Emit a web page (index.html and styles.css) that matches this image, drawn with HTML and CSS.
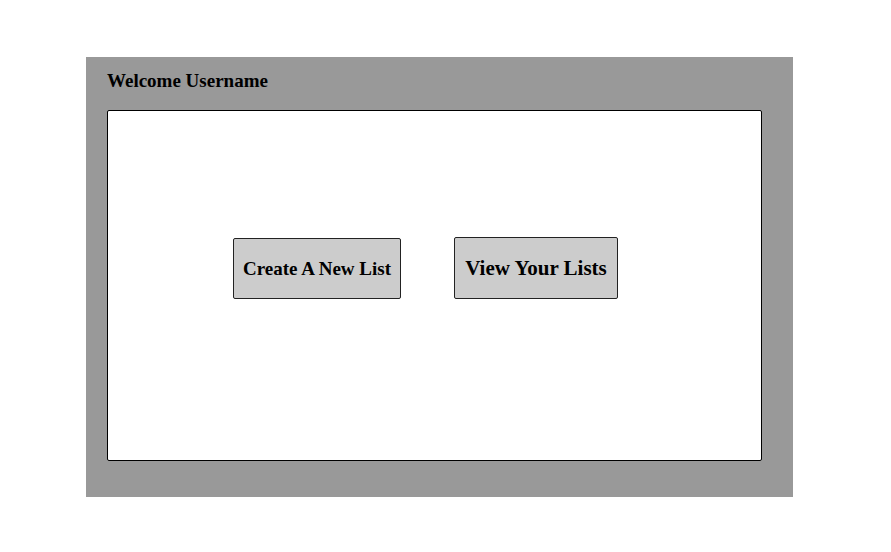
FILE: index.html
```html
<!DOCTYPE html>
<html lang="en">
<head>
<meta charset="utf-8">
<title>Welcome</title>
<link rel="stylesheet" href="styles.css">
</head>
<body>
	<div class="panel">
		<h1 class="welcome">Welcome Username</h1>
		<div class="content">
			<div class="actions">
				<a class="btn btn-create" href="#">Create A New List</a>
				<a class="btn btn-view" href="#">View Your Lists</a>
			</div>
		</div>
	</div>
</body>
</html>
```
FILE: styles.css
```css
* {
	font-family:"Liberation Serif", "Times New Roman", serif;
	box-sizing:border-box;
}
body {
	margin:0;
	background:#fff;
}
.panel {
	width:707px;
	height:440px;
	margin:57px 0 0 86px;
	background:#999999;
	padding:13px 31px 36px 21px;
}
.welcome {
	margin:0;
	height:40px;
	font-size:19px;
	font-weight:bold;
	line-height:22px;
	color:#000;
}
.content {
	width:655px;
	height:351px;
	background:#fff;
	border:1px solid #000;
	border-radius:2px;
	padding:126px 0 0 125px;
}
.actions {
	display:flex;
	align-items:center;
	gap:53px;
}
.btn {
	display:flex;
	align-items:center;
	justify-content:center;
	height:61px;
	background:#cccccc;
	border:1px solid #222;
	border-radius:2px;
	color:#000;
	text-decoration:none;
	font-weight:bold;
}
.btn-create {
	width:168px;
	font-size:19px;
	margin-top:1px;
}
.btn-view {
	width:164px;
	height:62px;
	font-size:21px;
}
```
